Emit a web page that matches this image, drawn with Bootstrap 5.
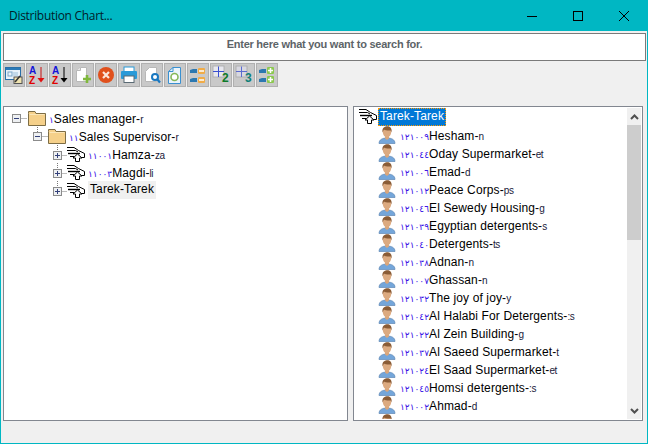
<!DOCTYPE html>
<html lang="en">
<head>
<meta charset="utf-8">
<title>Distribution Chart</title>
<link rel="stylesheet" href="https://cdn.jsdelivr.net/npm/bootstrap@5.3.0/dist/css/bootstrap.min.css">
<style>
html,body{margin:0;height:444px;overflow:hidden;background:#f0f0f0}
.win{width:648px;height:444px;border:1px solid #00b7c3;border-top:0;background:#f0f0f0;font-family:"Liberation Sans",Arial,sans-serif;font-size:12px;color:#000}
.titlebar{height:31px;background:#00b7c3;padding-left:8px;font-family:"Open Sans",sans-serif;font-size:12px;letter-spacing:-.3px;color:#00202a;flex:none}
.capbtn{width:46px;height:31px}
.searchbox{height:28px;margin:2px 1px 0 2px;border:1px solid #7a7a7a;background:#fff;font-size:11px;font-weight:700;color:#5d6468;letter-spacing:-.25px;padding-top:2px;flex:none}
.tools{gap:1px;margin:2px 0 0 2px;height:24px;flex:none}
.toolbtn{width:22px;height:24px;background:#c9c9c9;border:1px solid #b0b0b0;padding:0}
.panes{gap:5px;margin:19px 0 0 2px;height:315px;flex:none}
.pane{border:1px solid #828790;background:#fff;height:315px;overflow:hidden;position:relative}
.pane-left{width:345px}
.pane-right{width:290px;padding:1px}
.notch{position:absolute;left:4px;top:-1px;width:90px;height:3px;background:#fff}
.treerow{height:18px;white-space:nowrap;line-height:18px}
.treerow>.lbl{padding-top:1px}
.treebody{padding-top:2px}
.numb{font-family:"DejaVu Sans",sans-serif;font-size:9px;color:#3a14e6}
.tail{font-size:10px;letter-spacing:-.5px;color:#1a1a3a}
.nm{letter-spacing:.12px}
.cur{background:#f0f0f0;padding:0 2px;display:inline-block;line-height:17px}
.sel{background:#0078d7;color:#fff;outline:1px dotted #ff9a00;outline-offset:-1px;padding:0 2px;line-height:16px;margin-left:1px;display:inline-block}
.listwrap{width:271px;overflow:hidden;flex:none}
.childrow{padding-left:23px;gap:4px}
.childrow svg{flex:none}
.sb{width:15px;margin-left:1px;background:#f0f0f0;height:311px}
.sb-btn{height:17px;flex:none}
.sb-thumb{height:115px;background:#cdcdcd;flex:none}
svg{display:block}
.gut{flex:none}
.at{font:700 10px "Liberation Sans",sans-serif}
.num2{font:700 12px "Liberation Sans",sans-serif}
</style>
</head>
<body>
<svg width="0" height="0" class="position-absolute">
<defs>
<symbol id="hand" viewBox="0 0 18 16"><g fill="none" stroke="#000"><path d="M0 1.500H7L11.500 4.500L17.500 7.500V11.500H15"/><path d="M0 4.500H8.500L11 6"/><path d="M1 7.500H13" stroke-width="1.400"/><path d="M3 10.500H7"/></g><path d="M10.500 8L6 12H8.500V15.500H12.500V12H15Z" fill="#fff" stroke="#000"/></symbol>
<symbol id="folder" viewBox="0 0 18 16"><path d="M.5 3.500V1.500H7L8 3.500H17.500V15.500H.5Z" fill="#f5d08a" stroke="#7d6d45"/><path d="M1.500 4.500H16.500" stroke="#fbe6b8"/></symbol>
<symbol id="person" viewBox="0 0 18 18"><path d="M1 17.500C1 13.500 4.500 12 9 12S17 13.500 17 17.500Z" fill="#74a6da" stroke="#6088b4" stroke-width=".7"/><path d="M7 9H11V12.500L9 14L7 12.500Z" fill="#d9a67c"/><ellipse cx="9" cy="6" rx="4.200" ry="5.200" fill="#dcaa80"/><path d="M4.500 6.500C3.800 1.500 7 .3 9.500 .3C12.500 .3 14.300 3 13.500 6.500L12.800 4.500C10.500 4.800 7 4.500 6 3.500C5.300 4.500 5 5.500 4.500 6.500Z" fill="#8a5c36"/></symbol>
<symbol id="plusbox" viewBox="0 0 9 9"><rect x=".5" y=".5" width="8" height="8" fill="#eef0f2" stroke="#8b8b8b"/><path d="M2 4.500H7M4.500 2V7" stroke="#33407a"/></symbol>
<symbol id="minusbox" viewBox="0 0 9 9"><rect x=".5" y=".5" width="8" height="8" fill="#eef0f2" stroke="#8b8b8b"/><path d="M2 4.500H7" stroke="#33407a"/></symbol>
</defs>
</svg>
<div class="win d-flex flex-column">
  <div class="titlebar d-flex align-items-center">
    <span class="flex-grow-1">Distribution Chart...</span>
    <div class="capbtn d-flex align-items-center justify-content-center"><svg width="10" height="10"><path d="M0 5.500H10" stroke="#000"/></svg></div>
    <div class="capbtn d-flex align-items-center justify-content-center"><svg width="10" height="10"><rect x=".5" y=".5" width="9" height="9" fill="none" stroke="#000"/></svg></div>
    <div class="capbtn d-flex align-items-center justify-content-center"><svg width="10" height="10"><path d="M0 0L10 10M10 0L0 10" stroke="#000"/></svg></div>
  </div>
  <div class="searchbox text-center">Enter here what you want to search for.</div>
  <div class="tools d-flex">
    <button class="toolbtn btn rounded-0 d-flex align-items-center justify-content-center"><svg width="18" height="18"><rect x=".5" y="1.500" width="15" height="12" fill="#e8f2fa" stroke="#2a6fa8"/><rect x="1" y="2" width="14" height="2" fill="#2a7ab8"/><rect x="3" y="6" width="4" height="4" fill="none" stroke="#7aa6c8"/><path d="M8 7H13M8 9H13" stroke="#9cc0da"/><rect x="9" y="11" width="8" height="6.500" fill="#efe3b0" stroke="#555"/><path d="M10 16L15 10" stroke="#333" stroke-width="1.500"/></svg></button>
    <button class="toolbtn btn rounded-0 d-flex align-items-center justify-content-center"><svg width="18" height="18"><text x="1" y="7.500" class="at" fill="#1414d8">A</text><text x="1" y="17.500" class="at" fill="#e00000">Z</text><path d="M13 1V13" stroke="#c81010"/><path d="M9.500 12H16.500L13 16.500Z" fill="#e01010"/></svg></button>
    <button class="toolbtn btn rounded-0 d-flex align-items-center justify-content-center"><svg width="18" height="18"><text x="1" y="7.500" class="at" fill="#1414d8">A</text><text x="1" y="17.500" class="at" fill="#e00000">Z</text><path d="M13 1V13" stroke="#000"/><path d="M9.500 12H16.500L13 16.500Z" fill="#000"/></svg></button>
    <button class="toolbtn btn rounded-0 d-flex align-items-center justify-content-center"><svg width="18" height="18"><path d="M2.500 4.500L6.500 1.500H12.500V15.500H2.500Z" fill="#fff" stroke="#b8b8b8"/><path d="M2.500 4.500H6.500V1.500" fill="#e6e6e6" stroke="#b8b8b8"/><path d="M13 9V17M9 13H17" stroke="#7fb83c" stroke-width="2.600"/></svg></button>
    <button class="toolbtn btn rounded-0 d-flex align-items-center justify-content-center"><svg width="18" height="18"><circle cx="9" cy="9" r="8" fill="#e0501c"/><path d="M6 6L12 12M12 6L6 12" stroke="#fbe6dc" stroke-width="2.200"/></svg></button>
    <button class="toolbtn btn rounded-0 d-flex align-items-center justify-content-center"><svg width="18" height="18"><rect x="4" y="1" width="10" height="5" fill="#fff" stroke="#2a9ad8"/><rect x="1" y="5" width="16" height="8" rx="1" fill="#2a9ad8"/><rect x="4" y="10" width="10" height="6.500" fill="#fff" stroke="#5a6a74"/></svg></button>
    <button class="toolbtn btn rounded-0 d-flex align-items-center justify-content-center"><svg width="18" height="18"><path d="M2.500 5.500L6.500 1.500H13.500V15.500H2.500Z" fill="#fff" stroke="#b8b8b8"/><circle cx="12" cy="11" r="3" fill="#fff" stroke="#1a78c0" stroke-width="2"/><path d="M14 13L17 16.500" stroke="#1a78c0" stroke-width="2.200"/></svg></button>
    <button class="toolbtn btn rounded-0 d-flex align-items-center justify-content-center"><svg width="18" height="18"><path d="M2.500 5.500L7 1.500H14.500V17.500H2.500Z" fill="#eaf4fb" stroke="#3a90d0"/><path d="M2.500 5.500H7V1.500" fill="none" stroke="#3a90d0"/><circle cx="8.500" cy="11" r="3.500" fill="#fff" stroke="#86b85a" stroke-width="1.600"/></svg></button>
    <button class="toolbtn btn rounded-0 d-flex align-items-center justify-content-center"><svg width="18" height="18"><path d="M1 6V4L4 3H8V7H1ZM1 15V13L4 12H8V16H1Z" fill="#2c78b0"/><rect x="9" y="2" width="7" height="6" rx="1" fill="#f0ac48"/><path d="M10 5H15" stroke="#fff" stroke-width="1.500"/><rect x="9" y="11" width="7" height="6" rx="1" fill="#f0ac48"/><path d="M10 14H15" stroke="#fff" stroke-width="1.500"/></svg></button>
    <button class="toolbtn btn rounded-0 d-flex align-items-center justify-content-center"><svg width="18" height="20"><rect x="1" y="1" width="11" height="11" fill="#e8e8ee" stroke="#a8a8a8" stroke-width=".8"/><path d="M1 6.500H12M6.500 1.500V12" stroke="#3a50d0"/><text x="10" y="17" class="num2" fill="#0e7a28">2</text></svg></button>
    <button class="toolbtn btn rounded-0 d-flex align-items-center justify-content-center"><svg width="18" height="20"><rect x="1" y="1" width="11" height="11" fill="#d8d8e0" stroke="#a8a8a8" stroke-width=".8"/><path d="M1 6.500H12M6.500 1.500V12" stroke="#5a6ad0"/><text x="10" y="17" class="num2" fill="#0e8078">3</text></svg></button>
    <button class="toolbtn btn rounded-0 d-flex align-items-center justify-content-center"><svg width="18" height="18"><path d="M1 6V4L4 3H8V7H1ZM1 15V13L4 12H8V16H1Z" fill="#2c78b0"/><rect x="9" y="1" width="7" height="7" rx="1" fill="#8cc850"/><path d="M10 4.500H15M12.500 2V7" stroke="#fff" stroke-width="1.500"/><rect x="9" y="10" width="7" height="7" rx="1" fill="#8cc850"/><path d="M10 13.500H15M12.500 11V16" stroke="#fff" stroke-width="1.500"/></svg></button>
  </div>
  <div class="panes d-flex">
    <div class="pane pane-left">
      <div class="notch"></div>
      <div class="treebody">
        <div class="treerow d-flex"><svg class="gut" width="45" height="18"><use href="#minusbox" x="8" y="5" width="9" height="9"/><path d="M17.500 9.500H23" stroke="#777" stroke-dasharray="1 1"/><use href="#folder" x="24" y="1" width="18" height="16"/></svg><span class="lbl"><span class="numb">١</span><span class="nm">Sales manager-</span><span class="tail">r</span></span></div>
        <div class="treerow d-flex"><svg class="gut" width="65" height="18"><path d="M33.500 0V5" stroke="#777" stroke-dasharray="1 1"/><use href="#minusbox" x="29" y="5" width="9" height="9"/><path d="M38.500 9.500H44" stroke="#777" stroke-dasharray="1 1"/><use href="#folder" x="44" y="1" width="18" height="16"/></svg><span class="lbl"><span class="numb">١١</span><span class="nm">Sales Supervisor-</span><span class="tail">r</span></span></div>
        <div class="treerow d-flex"><svg class="gut" width="84" height="18"><path d="M53.500 0V5" stroke="#777" stroke-dasharray="1 1"/><use href="#plusbox" x="49" y="6" width="9" height="9"/><path d="M58.500 10.500H63" stroke="#777" stroke-dasharray="1 1"/><use href="#hand" x="63" y="1" width="18" height="16"/></svg><span class="lbl"><span class="numb">١١٠٠١</span><span class="nm">Hamza-</span><span class="tail">za</span></span></div>
        <div class="treerow d-flex"><svg class="gut" width="84" height="18"><path d="M53.500 0V5" stroke="#777" stroke-dasharray="1 1"/><use href="#plusbox" x="49" y="6" width="9" height="9"/><path d="M58.500 10.500H63" stroke="#777" stroke-dasharray="1 1"/><use href="#hand" x="63" y="1" width="18" height="16"/></svg><span class="lbl"><span class="numb">١١٠٠٣</span><span class="nm">Magdi-</span><span class="tail">li</span></span></div>
        <div class="treerow d-flex"><svg class="gut" width="84" height="18"><path d="M53.500 0V5" stroke="#777" stroke-dasharray="1 1"/><use href="#plusbox" x="49" y="6" width="9" height="9"/><path d="M58.500 10.500H63" stroke="#777" stroke-dasharray="1 1"/><use href="#hand" x="63" y="1" width="18" height="16"/></svg><span class="cur nm">Tarek-Tarek</span></div>
      </div>
    </div>
    <div class="pane pane-right d-flex">
      <div class="listwrap">
        <div class="treerow d-flex"><svg class="gut ms-1" width="18" height="16"><use href="#hand" width="18" height="16"/></svg><span class="sel nm">Tarek-Tarek</span></div>
        <div class="treerow d-flex childrow"><svg width="18" height="18"><use href="#person"/></svg><span class="lbl"><span class="numb">١٢١٠٠٩</span><span class="nm">Hesham-</span><span class="tail">n</span></span></div>
        <div class="treerow d-flex childrow"><svg width="18" height="18"><use href="#person"/></svg><span class="lbl"><span class="numb">١٢١٠٤٤</span><span class="nm">Oday Supermarket-</span><span class="tail">et</span></span></div>
        <div class="treerow d-flex childrow"><svg width="18" height="18"><use href="#person"/></svg><span class="lbl"><span class="numb">١٢١٠٠٦</span><span class="nm">Emad-</span><span class="tail">d</span></span></div>
        <div class="treerow d-flex childrow"><svg width="18" height="18"><use href="#person"/></svg><span class="lbl"><span class="numb">١٢١٠١٢</span><span class="nm">Peace Corps-</span><span class="tail">ps</span></span></div>
        <div class="treerow d-flex childrow"><svg width="18" height="18"><use href="#person"/></svg><span class="lbl"><span class="numb">١٢١٠٤٦</span><span class="nm">El Sewedy Housing-</span><span class="tail">g</span></span></div>
        <div class="treerow d-flex childrow"><svg width="18" height="18"><use href="#person"/></svg><span class="lbl"><span class="numb">١٢١٠٣٩</span><span class="nm">Egyptian detergents-</span><span class="tail">s</span></span></div>
        <div class="treerow d-flex childrow"><svg width="18" height="18"><use href="#person"/></svg><span class="lbl"><span class="numb">١٢١٠٤٠</span><span class="nm">Detergents-</span><span class="tail">ts</span></span></div>
        <div class="treerow d-flex childrow"><svg width="18" height="18"><use href="#person"/></svg><span class="lbl"><span class="numb">١٢١٠٣٨</span><span class="nm">Adnan-</span><span class="tail">n</span></span></div>
        <div class="treerow d-flex childrow"><svg width="18" height="18"><use href="#person"/></svg><span class="lbl"><span class="numb">١٢١٠٠٧</span><span class="nm">Ghassan-</span><span class="tail">n</span></span></div>
        <div class="treerow d-flex childrow"><svg width="18" height="18"><use href="#person"/></svg><span class="lbl"><span class="numb">١٢١٠٣٢</span><span class="nm">The joy of joy-</span><span class="tail">y</span></span></div>
        <div class="treerow d-flex childrow"><svg width="18" height="18"><use href="#person"/></svg><span class="lbl"><span class="numb">١٢١٠٤٢</span><span class="nm">Al Halabi For Detergents-</span><span class="tail">:s</span></span></div>
        <div class="treerow d-flex childrow"><svg width="18" height="18"><use href="#person"/></svg><span class="lbl"><span class="numb">١٢١٠٢٢</span><span class="nm">Al Zein Building-</span><span class="tail">g</span></span></div>
        <div class="treerow d-flex childrow"><svg width="18" height="18"><use href="#person"/></svg><span class="lbl"><span class="numb">١٢١٠٣٧</span><span class="nm">Al Saeed Supermarket-</span><span class="tail">t</span></span></div>
        <div class="treerow d-flex childrow"><svg width="18" height="18"><use href="#person"/></svg><span class="lbl"><span class="numb">١٢١٠٢٤</span><span class="nm">El Saad Supermarket-</span><span class="tail">et</span></span></div>
        <div class="treerow d-flex childrow"><svg width="18" height="18"><use href="#person"/></svg><span class="lbl"><span class="numb">١٢١٠٤٥</span><span class="nm">Homsi detergents-</span><span class="tail">:s</span></span></div>
        <div class="treerow d-flex childrow"><svg width="18" height="18"><use href="#person"/></svg><span class="lbl"><span class="numb">١٢١٠٠٢</span><span class="nm">Ahmad-</span><span class="tail">d</span></span></div>
        <div class="treerow d-flex childrow"><svg width="18" height="18"><use href="#person"/></svg></div>
      </div>
      <div class="sb d-flex flex-column">
        <div class="sb-btn d-flex align-items-center justify-content-center"><svg width="9" height="6"><path d="M1 5L4.500 1.500L8 5" fill="none" stroke="#505050" stroke-width="2"/></svg></div>
        <div class="sb-thumb"></div>
        <div class="flex-grow-1"></div>
        <div class="sb-btn d-flex align-items-center justify-content-center"><svg width="9" height="6"><path d="M1 1L4.500 4.500L8 1" fill="none" stroke="#505050" stroke-width="2"/></svg></div>
      </div>
    </div>
  </div>
</div>
<script src="https://cdn.jsdelivr.net/npm/bootstrap@5.3.0/dist/js/bootstrap.bundle.min.js"></script>
</body>
</html>
